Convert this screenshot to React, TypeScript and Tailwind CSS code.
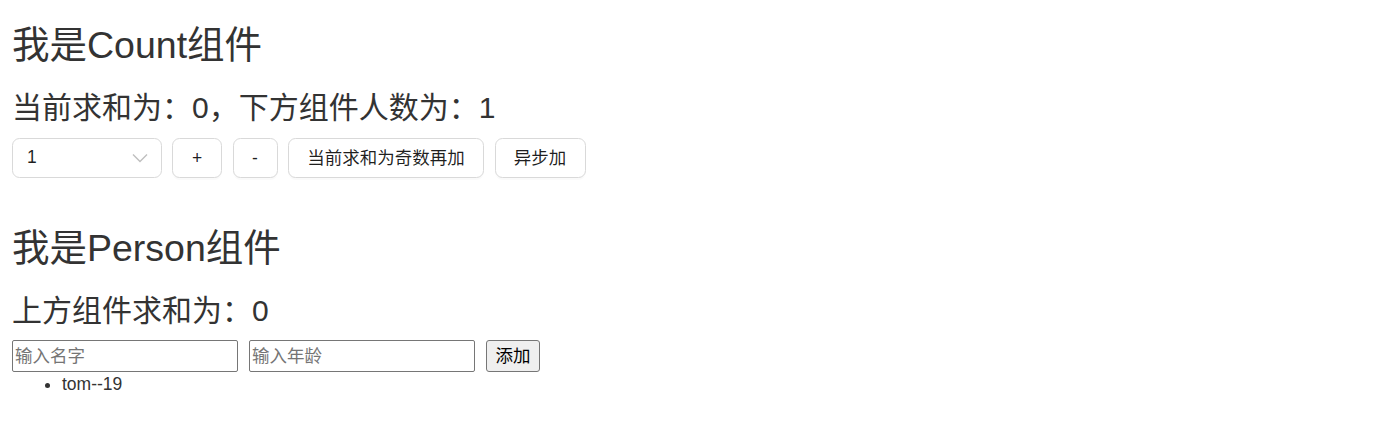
const font = "font-['Liberation_Sans','Noto_Sans_CJK_SC',sans-serif]";

function Count() {
  return (
    <div>
      <h2 className="mt-[25px] text-[37.5px] leading-[41.25px] font-normal">
        我是Count组件
      </h2>
      <h3 className="mt-[25px] text-[30px] leading-[33px] font-normal">
        当前求和为：0，下方组件人数为：1
      </h3>
      <div className="mt-[13.75px] flex items-start gap-[10.5px] text-[17.5px] text-[rgba(0,0,0,0.88)]">
        <div className="flex h-[40px] w-[149.5px] items-center justify-between rounded-[7.5px] border border-[#d9d9d9] bg-white pl-[14px] pr-[13px]">
          <span className="leading-none">1</span>
          <svg width="16" height="10" viewBox="0 0 16 10" fill="none">
            <polyline
              points="1,1.5 8,8.5 15,1.5"
              stroke="#bfbfbf"
              strokeWidth="1.4"
            />
          </svg>
        </div>
        <button className="h-[40px] w-[50px] rounded-[7.5px] border border-[#d9d9d9] bg-white shadow-[0_2px_0_rgba(0,0,0,0.02)]">
          +
        </button>
        <button className="h-[40px] w-[45px] rounded-[7.5px] border border-[#d9d9d9] bg-white shadow-[0_2px_0_rgba(0,0,0,0.02)]">
          -
        </button>
        <button className="h-[40px] w-[196px] rounded-[7.5px] border border-[#d9d9d9] bg-white shadow-[0_2px_0_rgba(0,0,0,0.02)]">
          当前求和为奇数再加
        </button>
        <button className="h-[40px] w-[91px] rounded-[7.5px] border border-[#d9d9d9] bg-white shadow-[0_2px_0_rgba(0,0,0,0.02)]">
          异步加
        </button>
      </div>
    </div>
  );
}

function Person() {
  return (
    <div>
      <h2 className="mt-[25px] text-[37.5px] leading-[41.25px] font-normal">
        我是Person组件
      </h2>
      <h3 className="mt-[25px] text-[30px] leading-[33px] font-normal">
        上方组件求和为：0
      </h3>
      <div className="mt-[12.75px] flex items-start gap-[11px] text-[17.5px]">
        <input
          type="text"
          placeholder="输入名字"
          className="h-[32px] w-[226px] rounded-[2px] border border-[#767676] px-[2px] placeholder:text-[#757575]"
        />
        <input
          type="text"
          placeholder="输入年龄"
          className="h-[32px] w-[226px] rounded-[2px] border border-[#767676] px-[2px] placeholder:text-[#757575]"
        />
        <button className="h-[32px] w-[54px] rounded-[3px] border border-[#767676] bg-[#efefef] text-black">
          添加
        </button>
      </div>
      <ul className="list-disc pl-[50px] text-[17.5px] leading-[25px]">
        <li>tom--19</li>
      </ul>
    </div>
  );
}

export default function App() {
  return (
    <div className={`${font} min-h-[429px] bg-white pl-[12px] text-[#333] flow-root`}>
      <Count />
      <div className="h-[25px]"></div>
      <Person />
    </div>
  );
}
